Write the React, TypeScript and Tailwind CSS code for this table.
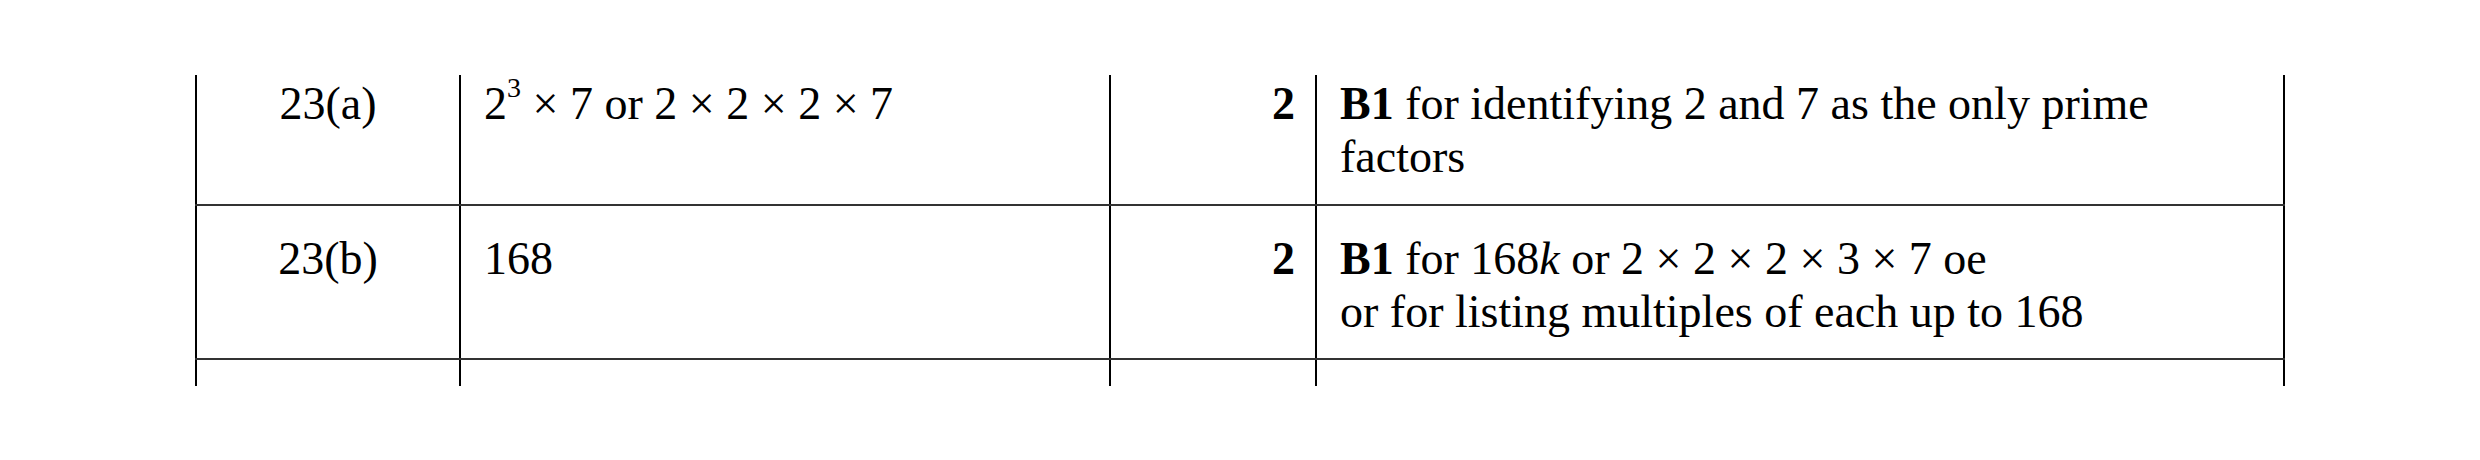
const rows = [
  {
    id: "23(a)",
    answer: (
      <>
        2<sup className="align-[8px] text-[28px] leading-none">3</sup> × 7 or 2 × 2 × 2 × 7
      </>
    ),
    mark: "2",
    notes: (
      <>
        <b>B1</b> for identifying 2 and 7 as the only prime
        <br />
        factors
      </>
    ),
    rowClass: "h-[129px] pt-[2px]",
  },
  {
    id: "23(b)",
    answer: <>168</>,
    mark: "2",
    notes: (
      <>
        <b>B1</b> for 168<i>k</i> or 2 × 2 × 2 × 3 × 7 oe
        <br />
        or for listing multiples of each up to 168
      </>
    ),
    rowClass: "h-[152px] pt-[26px]",
  },
]

export default function App() {
  return (
    <div className="h-[460px] w-[2480px] bg-white pl-[195px] pt-[75px] font-['Liberation_Serif','Times_New_Roman',serif] text-[46px] leading-[53px] text-black">
      {rows.map((row) => (
        <div
          key={row.id}
          className="grid w-fit grid-cols-[264px_650px_206px_970px] border-b-2 border-[#333]"
        >
          <div className={`border-l-2 border-black text-center ${row.rowClass}`}>{row.id}</div>
          <div className={`border-l-2 border-black pl-[23px] ${row.rowClass}`}>{row.answer}</div>
          <div className={`border-l-2 border-black pr-[20px] text-right font-bold ${row.rowClass}`}>
            {row.mark}
          </div>
          <div className={`border-x-2 border-black pl-[23px] ${row.rowClass}`}>{row.notes}</div>
        </div>
      ))}
      <div className="grid h-[26px] w-fit grid-cols-[264px_650px_206px_970px]">
        <div className="border-l-2 border-black" />
        <div className="border-l-2 border-black" />
        <div className="border-l-2 border-black" />
        <div className="border-x-2 border-black" />
      </div>
    </div>
  )
}
